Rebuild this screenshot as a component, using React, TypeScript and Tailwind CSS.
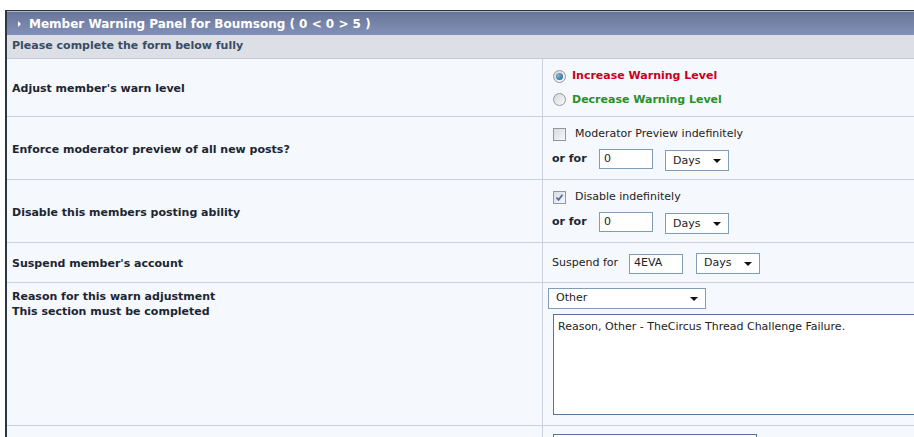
import React from 'react';

const Radio = ({ checked }: { checked?: boolean }) => (
  <span className="relative inline-flex h-[13px] w-[13px] shrink-0 items-center justify-center rounded-full border border-[#8f9aa6] bg-gradient-to-br from-[#d6d6d6] to-[#fbfbfb]">
    {checked && <span className="h-[7px] w-[7px] rounded-full bg-[radial-gradient(circle_at_35%_35%,#7fb4d8,#1d5a86)]" />}
  </span>
);

const Checkbox = ({ checked }: { checked?: boolean }) => (
  <span className="inline-flex h-[13px] w-[13px] shrink-0 items-center justify-center border border-[#8d99a6] bg-gradient-to-br from-[#d8dbe0] to-[#f7f8fa]">
    {checked && (
      <svg width="9" height="9" viewBox="0 0 9 9">
        <path d="M1.5 4.5 L3.5 6.8 L7.5 1.8" fill="none" stroke="#4a6fa6" strokeWidth="1.8" />
      </svg>
    )}
  </span>
);

const Caret = () => <span className="inline-block h-0 w-0 border-x-[4px] border-t-[4px] border-x-transparent border-t-[#111]" />;

const Select = ({ value, w }: { value: string; w: string }) => (
  <span className={`inline-flex h-[21px] items-center justify-between border border-[#7f9db9] bg-white pl-[7px] pr-[7px] text-[11px] text-[#222] ${w}`}>
    {value}
    <Caret />
  </span>
);

const TextBox = ({ value }: { value: string }) => (
  <span className="inline-flex h-[20px] w-[54px] items-center border border-[#7f9db9] bg-white px-[4px] text-[11px] text-[#222]">{value}</span>
);

const OrFor = ({ value }: { value: string }) => (
  <div className="flex items-center">
    <span className="w-[47px] text-[11px] font-bold text-[#1c2633]">or for</span>
    <TextBox value={value} />
    <span className="ml-[12px]">
      <Select value="Days" w="w-[64px]" />
    </span>
  </div>
);

const Row = ({ label, h, children, top }: { label: React.ReactNode; h: string; children: React.ReactNode; top?: boolean }) => (
  <div className={`grid grid-cols-[536px_1fr] border-b border-[#c9d1dc] ${h}`}>
    <div className={`flex border-r border-[#c9d1dc] pl-[5px] text-[11px] font-bold leading-[15px] text-[#1c2633] ${top ? 'items-start pt-[6px]' : 'items-center pt-[2px]'}`}>
      {label}
    </div>
    <div className="flex min-w-0 flex-col">{children}</div>
  </div>
);

export default function App() {
  return (
    <div className="h-[437px] w-[914px] overflow-hidden bg-white font-['DejaVu_Sans',Verdana,sans-serif]">
      <div className="ml-[5px] mt-[10px] w-[1000px] border-l-2 border-t border-[#2e3642] bg-[#f5f8fc]">
        <div className="flex h-[24px] items-center border-t border-[#aab4c8] bg-gradient-to-b from-[#6a7698] to-[#8291b9] pl-[11px] text-[12px] font-bold text-white">
          <span className="mr-[8px] inline-block h-0 w-0 border-y-[3px] border-l-[3px] border-y-transparent border-l-white" />
          Member Warning Panel for Boumsong ( 0 &lt; 0 &gt; 5 )
        </div>
        <div className="flex h-[24px] items-center border-b border-[#c4c8d0] bg-[#dcdfe6] pl-[5px] text-[11px] font-bold text-[#3a4b63]">
          Please complete the form below fully
        </div>

        <Row label="Adjust member's warn level" h="h-[58px]">
          <div className="flex flex-col gap-[7px] pl-[10px] pt-[9px] text-[11px] font-bold">
            <div className="flex items-center gap-[6px] text-[#c8001e]">
              <Radio checked />
              Increase Warning Level
            </div>
            <div className="flex items-center gap-[6px] text-[#2a8f2a]">
              <Radio />
              Decrease Warning Level
            </div>
          </div>
        </Row>

        <Row label="Enforce moderator preview of all new posts?" h="h-[63px]">
          <div className="flex flex-col gap-[4px] pl-[9px] pt-[9px]">
            <div className="flex items-center gap-[9px] pl-[1px] text-[11px] text-[#222]">
              <Checkbox />
              Moderator Preview indefinitely
            </div>
            <OrFor value="0" />
          </div>
        </Row>

        <Row label="Disable this members posting ability" h="h-[63px]">
          <div className="flex flex-col gap-[4px] pl-[9px] pt-[9px]">
            <div className="flex items-center gap-[9px] pl-[1px] text-[11px] text-[#222]">
              <Checkbox checked />
              Disable indefinitely
            </div>
            <OrFor value="0" />
          </div>
        </Row>

        <Row label="Suspend member's account" h="h-[40px]">
          <div className="flex h-full items-center pl-[9px] pt-[2px] text-[11px] text-[#222]">
            <span className="w-[77px]">Suspend for</span>
            <TextBox value="4EVA" />
            <span className="ml-[13px]">
              <Select value="Days" w="w-[64px]" />
            </span>
          </div>
        </Row>

        <Row
          top
          label={
            <div>
              Reason for this warn adjustment
              <br />
              This section must be completed
            </div>
          }
          h="h-[143px]"
        >
          <div className="flex flex-col gap-[5px] pl-[5px] pt-[5px]">
            <Select value="Other" w="w-[158px]" />
            <div className="ml-[5px] h-[101px] w-[400px] border border-[#56739a] bg-white px-[4px] pt-[4px] text-[11px] text-[#222]">
              Reason, Other - TheCircus Thread Challenge Failure.
            </div>
          </div>
        </Row>

        <Row label="" h="h-[30px]">
          <div className="pl-[10px] pt-[8px]">
            <div className="h-[20px] w-[204px] border border-[#56739a] bg-white" />
          </div>
        </Row>
      </div>
    </div>
  );
}
